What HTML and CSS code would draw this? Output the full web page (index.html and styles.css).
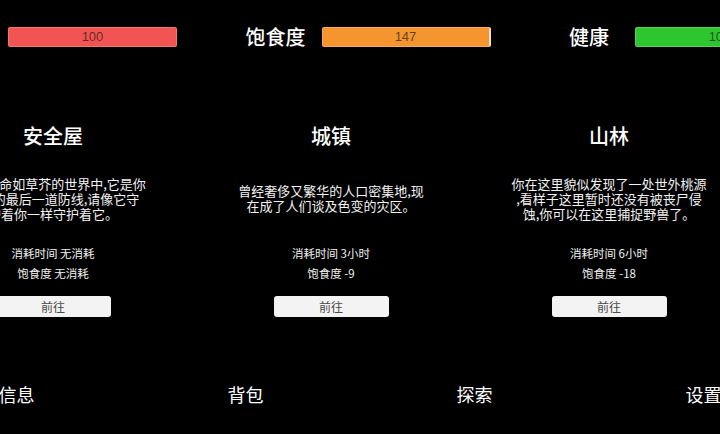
FILE: index.html
```html
<!DOCTYPE html>
<html lang="zh">
<head>
<meta charset="utf-8">
<title>末日生存</title>
<link rel="stylesheet" href="styles.css">
</head>
<body>
<div class="screen">
  <div class="status">
    <div class="stat">
      <div class="stat-label">生命</div>
      <div class="bar bar-red">100</div>
    </div>
    <div class="stat">
      <div class="stat-label">饱食度</div>
      <div class="bar bar-orange">147</div>
    </div>
    <div class="stat">
      <div class="stat-label">健康</div>
      <div class="bar bar-green">100</div>
    </div>
  </div>

  <div class="cards">
    <div class="card">
      <div class="card-title">安全屋</div>
      <div class="card-desc"><p>在这人命如草芥的世界中,它是你<br>唯一的最后一道防线,请像它守<br>护着你一样守护着它。</p></div>
      <div class="card-info">
        <div>消耗时间 无消耗</div>
        <div>饱食度 无消耗</div>
      </div>
      <button class="go">前往</button>
    </div>
    <div class="card">
      <div class="card-title">城镇</div>
      <div class="card-desc"><p>曾经奢侈又繁华的人口密集地,现<br>在成了人们谈及色变的灾区。</p></div>
      <div class="card-info">
        <div>消耗时间 3小时</div>
        <div>饱食度 -9</div>
      </div>
      <button class="go">前往</button>
    </div>
    <div class="card">
      <div class="card-title">山林</div>
      <div class="card-desc"><p>你在这里貌似发现了一处世外桃源<br>,看样子这里暂时还没有被丧尸侵<br>蚀,你可以在这里捕捉野兽了。</p></div>
      <div class="card-info">
        <div>消耗时间 6小时</div>
        <div>饱食度 -18</div>
      </div>
      <button class="go">前往</button>
    </div>
  </div>

  <nav class="nav">
    <div class="nav-item">信息</div>
    <div class="nav-item">背包</div>
    <div class="nav-item">探索</div>
    <div class="nav-item">设置</div>
  </nav>
</div>
</body>
</html>
```

FILE: styles.css
```css
html, body {
  margin: 0;
  padding: 0;
  background: #000;
}
body {
  width: 720px;
  height: 434px;
  overflow: hidden;
  font-family: "Noto Sans CJK SC", "Noto Sans", "Liberation Sans", sans-serif;
  color: #fff;
}
.screen {
  display: flex;
  flex-direction: column;
  width: 720px;
  height: 434px;
  overflow: hidden;
}

/* top status bars */
.status {
  display: flex;
  gap: 52.5px;
  margin-top: 27px;
  margin-left: -84px;
  height: 20px;
  flex-shrink: 0;
}
.stat {
  display: flex;
  flex-shrink: 0;
}
.stat-label {
  width: 92px;
  text-align: center;
  font-size: 20px;
  line-height: 20px;
  font-weight: 500;
}
.bar {
  box-sizing: border-box;
  width: 169px;
  height: 20px;
  border-radius: 2px;
  border: 1px solid rgba(255, 255, 255, 0.2);
  font-family: "Liberation Sans", "Noto Sans", sans-serif;
  font-size: 13px;
  line-height: 18px;
  text-align: center;
  color: rgba(20, 20, 20, 0.68);
}
.bar-red { background: #f25353; }
.bar-orange {
  background: #f5952f;
  border-right: 2px solid #e8e2d6;
}
.bar-green { background: #2ec62e; }

/* location cards */
.cards {
  display: flex;
  margin-left: -86px;
  margin-top: 77px;
  flex-shrink: 0;
}
.card {
  width: 278px;
  flex-shrink: 0;
  display: flex;
  flex-direction: column;
  align-items: center;
}
.card-title {
  font-size: 20px;
  line-height: 24px;
  font-weight: 500;
  height: 24px;
}
.card-desc {
  margin-top: 20px;
  height: 60px;
  width: 210px;
  display: flex;
  align-items: center;
  justify-content: center;
}
.card-desc p {
  margin: 0;
  font-size: 13px;
  line-height: 15px;
  text-align: center;
  white-space: nowrap;
  color: #f2f2f2;
}
.card-info {
  margin-top: 15px;
  font-size: 11.5px;
  line-height: 20px;
  text-align: center;
  color: #f0f0f0;
}
.go {
  margin-top: 13px;
  width: 115px;
  height: 21px;
  border: none;
  border-radius: 3px;
  background: #f3f3f3;
  color: #4a4a4a;
  font-family: "Noto Sans CJK SC", "Noto Sans", sans-serif;
  font-size: 12px;
  line-height: 21px;
  padding: 0;
}

/* bottom navigation */
.nav {
  display: flex;
  margin-left: -98px;
  margin-top: 65px;
  flex-shrink: 0;
}
.nav-item {
  width: 229px;
  flex-shrink: 0;
  text-align: center;
  font-size: 18px;
  line-height: 24px;
}
```
